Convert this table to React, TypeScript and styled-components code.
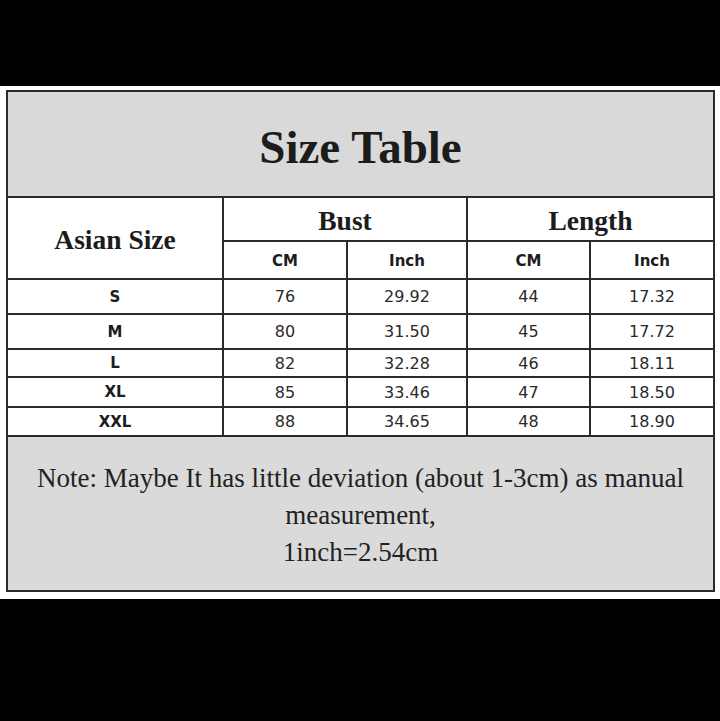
import styled, { createGlobalStyle } from 'styled-components'

const GlobalStyle = createGlobalStyle`
  html, body { margin: 0; padding: 0; background: #000; }
  #root { width: 720px; height: 721px; }
`

const rows = [
  { size: 'S', bustCm: '76', bustIn: '29.92', lenCm: '44', lenIn: '17.32', h: 35 },
  { size: 'M', bustCm: '80', bustIn: '31.50', lenCm: '45', lenIn: '17.72', h: 35 },
  { size: 'L', bustCm: '82', bustIn: '32.28', lenCm: '46', lenIn: '18.11', h: 28 },
  { size: 'XL', bustCm: '85', bustIn: '33.46', lenCm: '47', lenIn: '18.50', h: 30 },
  { size: 'XXL', bustCm: '88', bustIn: '34.65', lenCm: '48', lenIn: '18.90', h: 29 },
]

export default function App() {
  return (
    <Page>
      <GlobalStyle />
      <Band $h={86} />
      <Sheet>
        <Table>
          <colgroup>
            <col style={{ width: 216 }} />
            <col style={{ width: 124 }} />
            <col style={{ width: 120 }} />
            <col style={{ width: 123 }} />
            <col style={{ width: 124 }} />
          </colgroup>
          <tbody>
            <tr>
              <TitleCell colSpan={5}>Size Table</TitleCell>
            </tr>
            <tr>
              <GroupCell rowSpan={2}>Asian Size</GroupCell>
              <GroupCell colSpan={2} $h={42}>Bust</GroupCell>
              <GroupCell colSpan={2} $h={42}>Length</GroupCell>
            </tr>
            <tr>
              <UnitCell>CM</UnitCell>
              <UnitCell>Inch</UnitCell>
              <UnitCell>CM</UnitCell>
              <UnitCell>Inch</UnitCell>
            </tr>
            {rows.map(r => (
              <tr key={r.size}>
                <SizeCell $h={r.h}>{r.size}</SizeCell>
                <ValueCell>{r.bustCm}</ValueCell>
                <ValueCell>{r.bustIn}</ValueCell>
                <ValueCell>{r.lenCm}</ValueCell>
                <ValueCell>{r.lenIn}</ValueCell>
              </tr>
            ))}
            <tr>
              <NoteCell colSpan={5}>
                Note: Maybe It has little deviation (about 1-3cm) as manual
                <br />
                measurement,
                <br />
                1inch=2.54cm
              </NoteCell>
            </tr>
          </tbody>
        </Table>
      </Sheet>
      <Band $h={124} />
    </Page>
  )
}

const Page = styled.div`
  width: 720px;
  height: 721px;
  display: flex;
  flex-direction: column;
  background: #000;
`

const Band = styled.div<{ $h: number }>`
  height: ${p => p.$h}px;
  flex-shrink: 0;
  background: #000;
`

const Sheet = styled.div`
  background: #fff;
  padding: 4px 7px 7px 6px;
`

const Table = styled.table`
  width: 707px;
  table-layout: fixed;
  border-collapse: collapse;
  border: 2px solid #2a2a2a;
  color: #1c1c1c;

  td {
    border: 2px solid #2a2a2a;
    padding: 0;
    text-align: center;
    vertical-align: middle;
  }
`

const TitleCell = styled.td`
  height: 106px;
  background: #d9d9d9;
  font-family: "Liberation Serif", "Times New Roman", serif;
  font-weight: 700;
  font-size: 47px;
  padding-top: 6px !important;
  box-sizing: border-box;
`

const GroupCell = styled.td<{ $h?: number }>`
  ${p => (p.$h ? `height: ${p.$h - 4}px;` : '')}
  background: #fff;
  font-family: "Liberation Serif", "Times New Roman", serif;
  font-weight: 700;
  font-size: 27.5px;
  padding-top: 4px !important;
`

const UnitCell = styled.td`
  height: 34px;
  background: #fff;
  font-family: "DejaVu Sans", Verdana, sans-serif;
  font-weight: 700;
  font-size: 15px;
  padding-top: 2px !important;
`

const SizeCell = styled.td<{ $h: number }>`
  height: ${p => p.$h - 2}px;
  background: #fff;
  font-family: "DejaVu Sans", Verdana, sans-serif;
  font-weight: 700;
  font-size: 15px;
`

const ValueCell = styled.td`
  background: #fff;
  font-family: "DejaVu Sans", Verdana, sans-serif;
  font-size: 16px;
  color: #2a2a2a;
`

const NoteCell = styled.td`
  height: 149px;
  background: #dadada;
  font-family: "Liberation Serif", "Times New Roman", serif;
  font-size: 27px;
  line-height: 37px;
  color: #222;
  padding-top: 4px !important;
`
